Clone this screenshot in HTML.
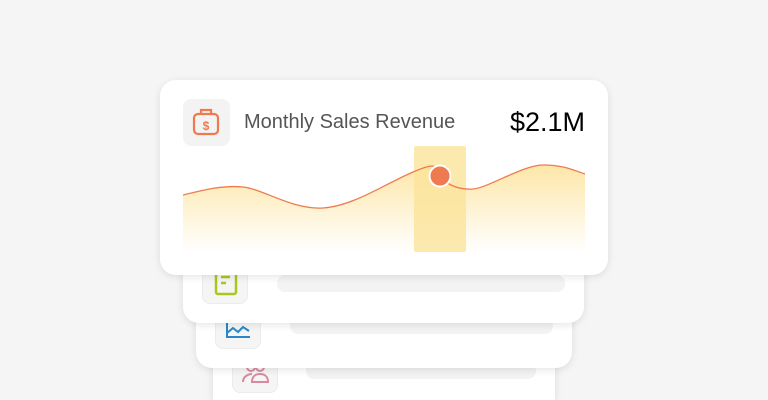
<!DOCTYPE html><html style="overflow:hidden;height:400px"><head><style>
body{margin:0;width:768px;height:400px;background:#f5f5f5;position:relative;overflow:hidden;font-family:"Liberation Sans",sans-serif}
.c{position:absolute;background:#fff;border-radius:16px;box-shadow:0 2px 8px rgba(0,0,0,.10)}
.ib{position:absolute;width:46px;height:46px;background:#f5f5f5;border-radius:8px;border:1px solid #ececec;box-sizing:border-box}
.bar{position:absolute;height:17px;background:#f3f3f3;border-radius:8px}
</style></head><body>
<div class="c" style="left:213px;top:300px;width:342px;height:100px;border-radius:16px 16px 0 0"></div>
<div class="ib" style="left:232px;top:347px"><svg width="46" height="46"><g fill="none" stroke="#d98aa0" stroke-width="2"><circle cx="18" cy="19" r="4"/><circle cx="27" cy="19" r="4"/><path d="M10 34c0-6 6-8 9-8M19 34c0-6 4-8 8-8s8 2 8 8z"/></g></svg></div>
<div class="bar" style="left:306px;top:362px;width:230px"></div>
<div class="c" style="left:196px;top:255px;width:376px;height:113px"></div>
<div class="ib" style="left:215px;top:303px"><svg width="46" height="46"><g fill="none" stroke="#2a86c8" stroke-width="2"><path d="M11 17v16h23M11 29l6-5 5 4 5-5 6 4"/></g></svg></div>
<div class="bar" style="left:290px;top:317px;width:263px"></div>
<div class="c" style="left:183px;top:210px;width:401px;height:113px"></div>
<div class="ib" style="left:202px;top:258px"><svg width="46" height="46"><g fill="none" stroke="#a8c81c" stroke-width="2.5"><rect x="13" y="9" width="20" height="26" rx="2"/><path d="M18 18h9M18 24h5"/></g></svg></div>
<div class="bar" style="left:277px;top:275px;width:288px"></div>
<div class="c" style="left:160px;top:80px;width:448px;height:195px">
<div class="ib" style="left:23px;top:19px;width:47px;height:47px;border:none;background:#f3f3f3"><svg width="47" height="47"><g fill="none" stroke="#ef7a4f" stroke-width="2.2"><rect x="11" y="15" width="24" height="20" rx="4"/><path d="M18 15v-4h10v4"/></g><text x="23" y="31" font-size="12" fill="#ef7a4f" text-anchor="middle" font-family="Liberation Sans" font-weight="bold">$</text></svg></div>
<div style="position:absolute;left:84px;top:31px;font-size:20px;color:#555">Monthly Sales Revenue</div>
<div style="position:absolute;right:23px;top:27px;font-size:27px;color:#000">$2.1M</div>
<svg style="position:absolute;left:23px;top:65px" width="403" height="108">
<defs><linearGradient id="g" x1="0" y1="0" x2="0" y2="1"><stop offset="0" stop-color="#fde6a8"/><stop offset="1" stop-color="#fff"/></linearGradient></defs>
<path d="M0 50C20 45 40 40 60 42S110 65 140 63 200 40 230 27 250 25 257 32 275 45 290 44 340 20 360 20 390 25 402 29V108H0Z" fill="url(#g)"/>
<rect x="231" y="1" width="52" height="106" fill="#fbe49a" opacity=".8" rx="2"/>
<path d="M0 50C20 45 40 40 60 42S110 65 140 63 200 40 230 27 250 25 257 32 275 45 290 44 340 20 360 20 390 25 402 29" fill="none" stroke="#ef7a4f" stroke-width="1.3"/>
<circle cx="257" cy="31" r="10.5" fill="#ef7a4f" stroke="#fff" stroke-width="2"/>
</svg>
</div>
</body></html>
